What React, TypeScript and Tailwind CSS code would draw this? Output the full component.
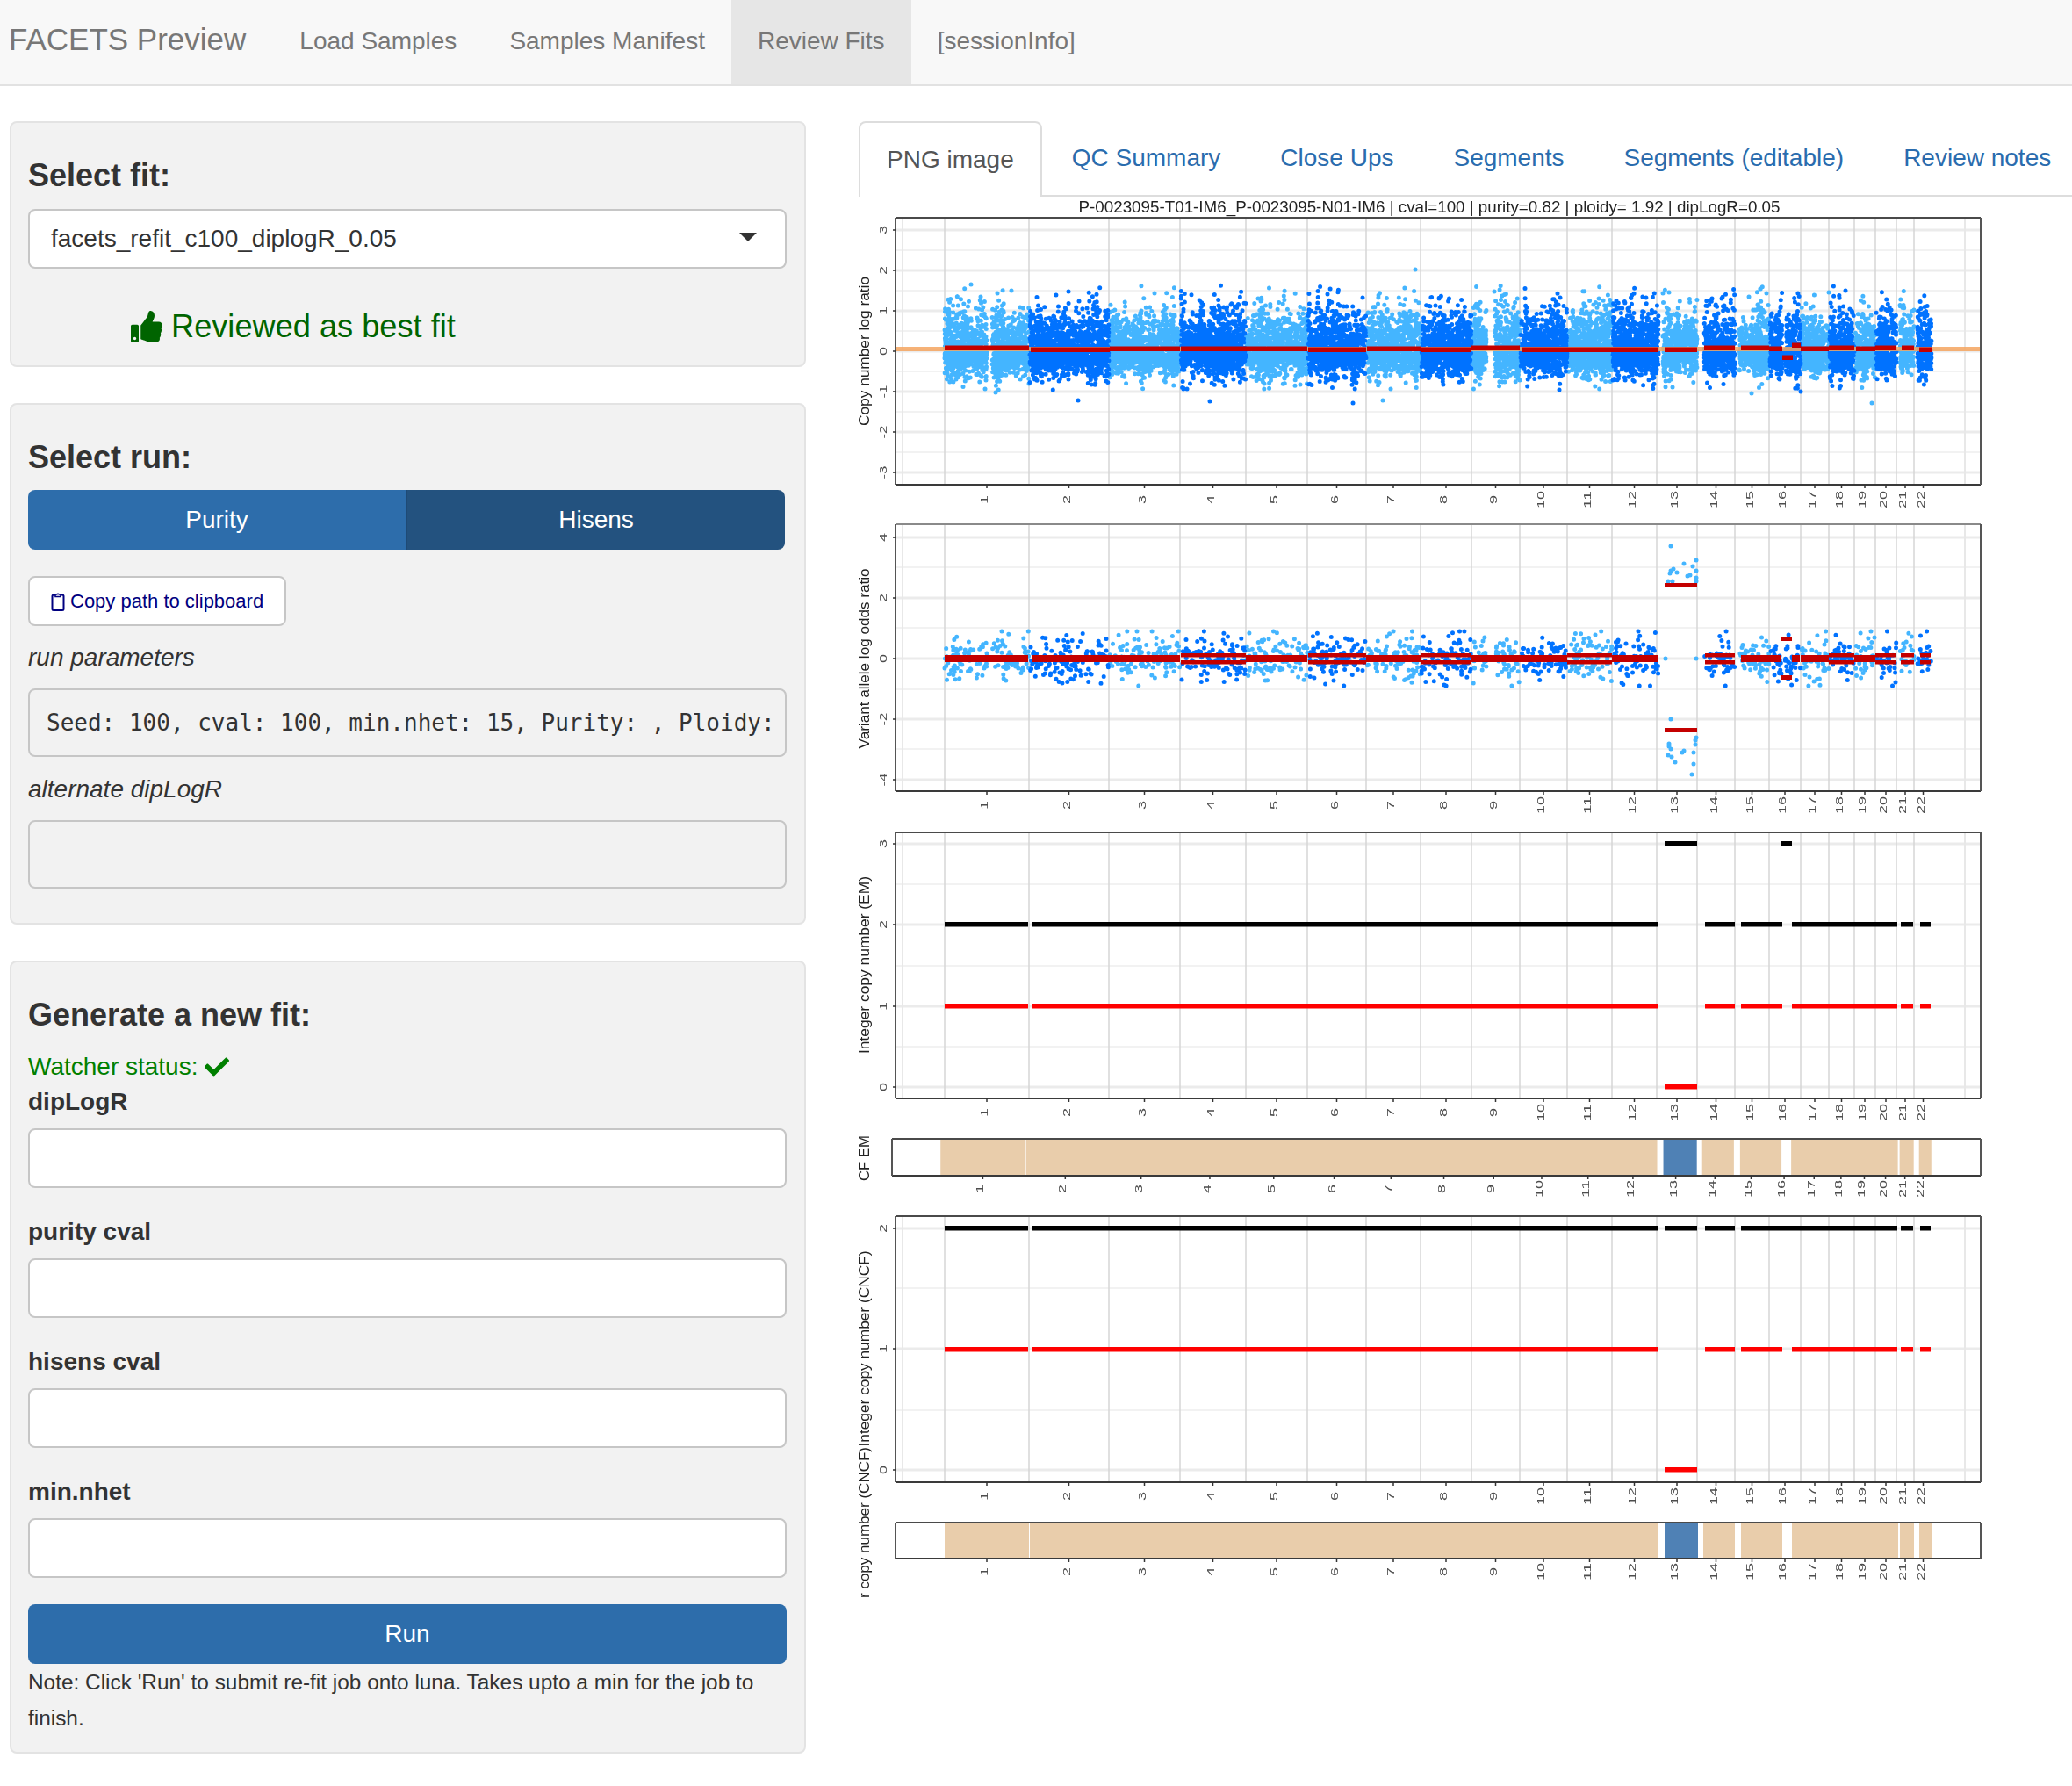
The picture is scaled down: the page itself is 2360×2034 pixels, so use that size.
import { useMemo } from 'react'
import { FaCheck, FaThumbsUp } from 'react-icons/fa'

// chromosome boundaries of the facets plot, in page pixels
const CHROM = [1076, 1172, 1263, 1344, 1419, 1489, 1556, 1618, 1676, 1731, 1785, 1836, 1887, 1933, 1976, 2015, 2051, 2083, 2112, 2136, 2160, 2180, 2201]
const X_LEFT = 1020
const X_RIGHT = 2256

// where the probes actually are (white gaps at centromeres and chr13 etc.)
const PROBE_SPANS: [number, number, number][] = [
  [1076, 1124, 1], [1130, 1172, 1], [1173, 1263, 2], [1264, 1344, 3], [1345, 1419, 4], [1420, 1489, 5], [1490, 1556, 6],
  [1557, 1618, 7], [1619, 1676, 8], [1677, 1693, 9], [1703, 1731, 9], [1732, 1785, 10], [1786, 1836, 11], [1837, 1889, 12],
  [1894, 1933, 13], [1941, 1976, 14], [1981, 2015, 15], [2016, 2030, 16], [2033, 2051, 16], [2052, 2083, 17], [2084, 2112, 18],
  [2113, 2136, 19], [2137, 2160, 20], [2164, 2180, 21], [2184, 2200, 22],
]

function mulberry(seed: number) {
  let a = seed
  return () => {
    a = (a + 0x6d2b79f5) | 0
    let t = Math.imul(a ^ (a >>> 15), 1 | a)
    t = (t + Math.imul(t ^ (t >>> 7), 61 | t)) ^ t
    return ((t ^ (t >>> 14)) >>> 0) / 4294967296
  }
}

function gauss(r: () => number) {
  const g = Math.sqrt(-2 * Math.log(r() + 1e-9)) * Math.cos(2 * Math.PI * r())
  return Math.max(-2.5, Math.min(2.5, g))
}

function buildLogR() {
  const r = mulberry(11)
  const paths = { light: '', dark: '' }
  for (const [a, b, chr] of PROBE_SPANS) {
    let s = ''
    const n = (b - a) * 14
    // every few pixels the spread changes, that gives the streaky columns
    const bins = Math.ceil((b - a) / 5) + 1
    const amp = Array.from({ length: bins }, () => 0.6 + r() * 0.55)
    for (let i = 0; i < n; i++) {
      const x = a + r() * (b - a)
      const k = amp[Math.floor((x - a) / 5)]
      const g = gauss(r)
      const v = g > 0 ? g * 0.58 * k : g * 0.34 * k
      const y = 400 - v * 46
      s += `M${x.toFixed(1)} ${y.toFixed(1)}h0`
    }
    if (chr % 2) paths.light += s
    else paths.dark += s
  }
  return paths
}

// hand read dots around the chr13 segments in the log odds plot
const LOR_CHR13 = [
  [1903, 622], [1903, 650], [1906, 648], [1910, 652], [1900, 662], [1905, 662], [1918, 642], [1932, 638], [1928, 645], [1932, 650], [1922, 656], [1925, 655], [1932, 658],
  [1932, 662], [1902, 653], [1903, 819], [1901, 847], [1903, 853], [1900, 860], [1904, 862], [1908, 868], [1918, 855], [1931, 843], [1931, 848], [1929, 857], [1929, 870],
  [1927, 882], [1916, 857], [1901, 850], [1932, 840], [1897, 750], [1932, 750],
]

function buildLogOdds() {
  const r = mulberry(29)
  const paths = { light: '', dark: '' }
  for (const [x, y] of LOR_CHR13) paths.light += `M${x} ${y}h0`
  for (const [a, b, chr] of PROBE_SPANS) {
    if (chr === 13) continue
    let s = ''
    const n = (b - a) * 1.5
    for (let i = 0; i < n; i++) {
      const x = a + r() * (b - a)
      const y = 750 - gauss(r) * 0.36 * 34.5
      s += `M${x.toFixed(1)} ${y.toFixed(1)}h0`
    }
    if (chr % 2) paths.light += s
    else paths.dark += s
  }
  return paths
}

// x1, x2, y of the red segment lines in the log ratio plot
const CNLR_SEGS = [
  [1076, 1172, 396], [1174, 1264, 398], [1264, 1344, 397], [1345, 1419, 397], [1419, 1489, 397], [1490, 1556, 398], [1557, 1618, 397], [1619, 1676, 398],
  [1676, 1731, 396], [1733, 1785, 398], [1785, 1836, 398], [1836, 1889, 398], [1896, 1933, 398], [1941, 1976, 396], [1983, 2015, 396], [2015, 2030, 397],
  [2030, 2042, 407], [2041, 2051, 393], [2051, 2083, 397], [2083, 2112, 396], [2114, 2136, 397], [2136, 2160, 396], [2166, 2180, 396], [2186, 2200, 398],
]

const CNLR_OUTLIERS = [
  [1106, 324], [1612, 307], [1152, 331], [1136, 334], [1217, 332], [1229, 343], [1315, 334], [1512, 335], [1433, 340], [1552, 339], [1635, 348], [1702, 332],
  [1777, 339], [1894, 334], [1901, 333], [1950, 340], [1961, 340], [1992, 338], [2012, 334], [2083, 333], [2102, 331], [1122, 443], [1134, 447], [1228, 456],
  [1352, 443], [1378, 457], [1541, 459], [1575, 456], [1584, 443], [1995, 448], [2132, 459], [2051, 446], [1776, 444], [1905, 441],
]

const LOR_SEGS = [
  [1076, 1171], [1175, 1263], [1263, 1344], [1419, 1489], [1556, 1618], [1676, 1731], [1731, 1785], [1836, 1889], [1983, 2029], [2041, 2050], [2051, 2083], [2112, 2136],
]
const LOR_DOUBLE = [
  [1345, 1419], [1490, 1556], [1619, 1676], [1785, 1836], [1942, 1976], [2083, 2112], [2136, 2160], [2165, 2180], [2187, 2199],
]

const EM_BLACK = [[1076, 1171], [1175, 1889], [1942, 1976], [1983, 2030], [2041, 2161], [2165, 2179], [2187, 2199]]
const EM_RED = EM_BLACK
const CNCF_BLACK = [[1076, 1171], [1175, 1889], [1896, 1933], [1942, 1976], [1983, 2161], [2165, 2179], [2187, 2199]]

const TAN_BANDS = [[1076, 1172], [1173, 1889], [1940, 1976], [1983, 2030], [2041, 2162], [2164, 2180], [2186, 2200]]

// the CF EM strip has a slightly wider panel, so its x scale is a bit different
const cfEmX = (x: number) => x - (5 * (X_RIGHT - x)) / (X_RIGHT - X_LEFT)
const sameX = (x: number) => x

function Frame({ top, bottom, left = X_LEFT, lightTop = false }: { top: number; bottom: number; left?: number; lightTop?: boolean }) {
  return (
    <>
      <line x1={left} x2={X_RIGHT} y1={top} y2={top} stroke={lightTop ? '#8a8a8a' : '#4a4a4a'} strokeWidth={2} />
      <line x1={left} x2={X_RIGHT} y1={bottom} y2={bottom} stroke="#3a3a3a" strokeWidth={2} />
      <line x1={left} x2={left} y1={top} y2={bottom} stroke="#555" strokeWidth={2} />
      <line x1={X_RIGHT} x2={X_RIGHT} y1={top} y2={bottom} stroke="#555" strokeWidth={2} />
    </>
  )
}

function VGrid({ top, bottom }: { top: number; bottom: number }) {
  return (
    <>
      {CHROM.slice(0, 22).map((x) => (
        <line key={x} x1={x} x2={x} y1={top} y2={bottom} stroke="#d6d6d6" strokeWidth={1.5} />
      ))}
      <line x1={1028} x2={1028} y1={top} y2={bottom} stroke="#e8e8e8" strokeWidth={2} />
      <line x1={2238} x2={2238} y1={top} y2={bottom} stroke="#e8e8e8" strokeWidth={2} />
    </>
  )
}

function HGrid({ major, minor }: { major: number[]; minor: number[] }) {
  return (
    <>
      {minor.map((y) => (
        <line key={y} x1={X_LEFT} x2={X_RIGHT} y1={y} y2={y} stroke="#f2f2f2" strokeWidth={2} />
      ))}
      {major.map((y) => (
        <line key={y} x1={X_LEFT} x2={X_RIGHT} y1={y} y2={y} stroke="#ebebeb" strokeWidth={3} />
      ))}
    </>
  )
}

function XAxis({ axisY, labelY, mapX = sameX }: { axisY: number; labelY: number; mapX?: (x: number) => number }) {
  return (
    <>
      {CHROM.slice(0, 22).map((start, i) => {
        const x = mapX((start + CHROM[i + 1]) / 2)
        const label = String(i + 1)
        return (
          <g key={start}>
            <line x1={x} x2={x} y1={axisY} y2={axisY + 4} stroke="#333" strokeWidth={1.5} />
            <text
              x={x + 1}
              y={labelY}
              fontSize={11}
              fill="#4d4d4d"
              textAnchor="middle"
              textLength={label.length === 1 ? 10 : 20}
              lengthAdjust="spacingAndGlyphs"
              transform={`rotate(-90 ${x + 1} ${labelY})`}
            >
              {label}
            </text>
          </g>
        )
      })}
    </>
  )
}

function YAxis({ ticks, left = X_LEFT }: { ticks: [string, number][]; left?: number }) {
  return (
    <>
      {ticks.map(([label, y]) => (
        <g key={label}>
          <line x1={left - 3} x2={left} y1={y} y2={y} stroke="#333" strokeWidth={1.5} />
          <text
            x={1010}
            y={y}
            fontSize={11}
            fill="#4d4d4d"
            textAnchor="middle"
            textLength={label.length === 1 ? 10 : 15}
            lengthAdjust="spacingAndGlyphs"
            transform={`rotate(-90 1010 ${y})`}
          >
            {label}
          </text>
        </g>
      ))}
    </>
  )
}

function YTitle({ y, length, children }: { y: number; length: number; children: string }) {
  return (
    <text
      x={990}
      y={y}
      fontSize={16}
      fill="#222"
      textAnchor="middle"
      textLength={length}
      lengthAdjust="spacingAndGlyphs"
      transform={`rotate(-90 990 ${y})`}
    >
      {children}
    </text>
  )
}

function Bands({ top, bottom, mapX = sameX }: { top: number; bottom: number; mapX?: (x: number) => number }) {
  return (
    <>
      {TAN_BANDS.map(([a, b]) => (
        <rect key={a} x={mapX(a)} y={top} width={mapX(b) - mapX(a)} height={bottom - top} fill="#e9cdab" />
      ))}
      <rect x={mapX(1896)} y={top} width={mapX(1934) - mapX(1896)} height={bottom - top} fill="#4f81b5" />
    </>
  )
}

function FacetsPlot() {
  const logR = useMemo(buildLogR, [])
  const logOdds = useMemo(buildLogOdds, [])

  return (
    <svg
      width={1290}
      height={1614}
      viewBox="970 224 1290 1614"
      className="block blur-[0.5px]"
      style={{ fontFamily: '"Liberation Sans", Arial, sans-serif' }}
    >
      <text x={1628} y={242} fontSize={18} fill="#222" textAnchor="middle" textLength={799} lengthAdjust="spacingAndGlyphs">
        P-0023095-T01-IM6_P-0023095-N01-IM6 | cval=100 | purity=0.82 | ploidy= 1.92 | dipLogR=0.05
      </text>

      {/* cnlr */}
      <HGrid major={[262, 308, 354, 400, 446, 492, 538]} minor={[285, 331, 377, 423, 469, 515]} />
      <VGrid top={248} bottom={552} />
      <path d={logR.light} stroke="#44b5ff" strokeWidth={5} strokeLinecap="round" fill="none" />
      <path d={logR.dark} stroke="#0072ff" strokeWidth={5} strokeLinecap="round" fill="none" />
      {CNLR_OUTLIERS.map(([x, y]) => {
        const odd = PROBE_SPANS.find(([a, b]) => x >= a - 3 && x <= b + 3)
        return <circle key={`${x}-${y}`} cx={x} cy={y} r={2.5} fill={odd && odd[2] % 2 === 0 ? '#0072ff' : '#44b5ff'} />
      })}
      <rect x={X_LEFT} y={395} width={X_RIGHT - X_LEFT} height={5} fill="#f5a45f" opacity={0.85} />
      {CNLR_SEGS.map(([a, b, y]) => (
        <rect key={a} x={a} y={y - 2.5} width={b - a} height={5.5} fill="#c40000" />
      ))}
      <Frame top={248} bottom={552} />
      <YAxis ticks={[['3', 262], ['2', 308], ['1', 354], ['0', 400], ['-1', 446], ['-2', 492], ['-3', 538]]} />
      <XAxis axisY={552} labelY={569} />
      <YTitle y={400} length={170}>Copy number log ratio</YTitle>

      {/* valor */}
      <HGrid major={[612, 681, 750, 819, 888]} minor={[646, 715, 785, 853]} />
      <VGrid top={597} bottom={901} />
      <path d={logOdds.light} stroke="#44b5ff" strokeWidth={5} strokeLinecap="round" fill="none" />
      <path d={logOdds.dark} stroke="#0072ff" strokeWidth={5} strokeLinecap="round" fill="none" />
      {LOR_SEGS.map(([a, b]) => (
        <rect key={a} x={a} y={746} width={b - a} height={8} fill="#c40000" />
      ))}
      {LOR_DOUBLE.map(([a, b]) => (
        <g key={a}>
          <rect x={a} y={744} width={b - a} height={4.5} fill="#c40000" />
          <rect x={a} y={752} width={b - a} height={4.5} fill="#c40000" />
        </g>
      ))}
      <rect x={1896} y={664} width={37} height={5} fill="#c40000" />
      <rect x={1896} y={829} width={37} height={5} fill="#c40000" />
      <rect x={2029} y={725} width={12} height={5} fill="#c40000" />
      <rect x={2029} y={769} width={12} height={5} fill="#c40000" />
      <Frame top={597} bottom={901} lightTop />
      <YAxis ticks={[['4', 612], ['2', 681], ['0', 750], ['-2', 819], ['-4', 888]]} />
      <XAxis axisY={901} labelY={917} />
      <YTitle y={750} length={205}>Variant allele log odds ratio</YTitle>

      {/* em integer copy number */}
      <HGrid major={[961, 1053, 1146, 1238]} minor={[1007, 1100, 1192]} />
      <VGrid top={948} bottom={1251} />
      {EM_BLACK.map(([a, b]) => (
        <rect key={a} x={a} y={1050} width={b - a} height={5.5} fill="#000" />
      ))}
      {EM_RED.map(([a, b]) => (
        <rect key={a} x={a} y={1143} width={b - a} height={5.5} fill="#f00" />
      ))}
      <rect x={1896} y={958} width={37} height={5.5} fill="#000" />
      <rect x={2029} y={958} width={12} height={5.5} fill="#000" />
      <rect x={1896} y={1235} width={37} height={5.5} fill="#f00" />
      <Frame top={948} bottom={1251} />
      <YAxis ticks={[['3', 961], ['2', 1053], ['1', 1146], ['0', 1238]]} />
      <XAxis axisY={1251} labelY={1267} />
      <YTitle y={1099} length={202}>Integer copy number (EM)</YTitle>

      {/* cf em */}
      <Bands top={1297} bottom={1339} mapX={cfEmX} />
      <Frame top={1297} bottom={1339} left={1016} />
      <XAxis axisY={1339} labelY={1354} mapX={cfEmX} />
      <YTitle y={1319} length={52}>CF EM</YTitle>

      {/* cncf integer copy number */}
      <HGrid major={[1399, 1536, 1674]} minor={[1467, 1606]} />
      <VGrid top={1385} bottom={1688} />
      {CNCF_BLACK.map(([a, b]) => (
        <rect key={a} x={a} y={1396} width={b - a} height={5.5} fill="#000" />
      ))}
      {EM_RED.map(([a, b]) => (
        <rect key={a} x={a} y={1534} width={b - a} height={5.5} fill="#f00" />
      ))}
      <rect x={1896} y={1671} width={37} height={5.5} fill="#f00" />
      <Frame top={1385} bottom={1688} />
      <YAxis ticks={[['2', 1399], ['1', 1536], ['0', 1674]]} />
      <XAxis axisY={1688} labelY={1704} />
      <YTitle y={1536} length={223}>Integer copy number (CNCF)</YTitle>

      {/* cf cncf */}
      <Bands top={1734} bottom={1775} />
      <Frame top={1734} bottom={1775} />
      <XAxis axisY={1775} labelY={1790} />
      <YTitle y={1734} length={172}>r copy number (CNCF)</YTitle>
    </svg>
  )
}

const NAV_LINKS = ['Load Samples', 'Samples Manifest', 'Review Fits', '[sessionInfo]']
const TABS = ['QC Summary', 'Close Ups', 'Segments', 'Segments (editable)', 'Review notes']

function Field({ label }: { label: string }) {
  return (
    <div className="mb-[30px]">
      <label className="block text-[28px] leading-[40px] font-bold text-[#333] mb-[10px]">{label}</label>
      <div className="h-[68px] bg-white border-2 border-[#c6c6c6] rounded-lg" />
    </div>
  )
}

export default function App() {
  return (
    <div className="min-h-[2034px] bg-white text-[28px] text-[#333] font-['Liberation_Sans',Arial,sans-serif]">
      <nav className="flex h-[98px] items-stretch bg-[#f8f8f8] border-b-2 border-[#e2e2e2]">
        <a className="pl-[10px] pr-[31px] text-[35px] leading-[90px] text-[#777]">FACETS Preview</a>
        {NAV_LINKS.map((link) => (
          <a
            key={link}
            className={`px-[30px] leading-[93px] text-[#777] ${link === 'Review Fits' ? 'bg-[#e6e6e6] text-[#555]' : ''}`}
          >
            {link}
          </a>
        ))}
      </nav>

      <div className="flex">
        <aside className="w-[907px] ml-[11px] shrink-0 pt-[40px]">
          <section className="h-[280px] bg-[#f2f2f2] border-2 border-[#e3e3e3] rounded-lg pl-[19px] pr-[20px] pt-[40px]">
            <h4 className="text-[36px] leading-[40px] font-bold text-[#333]">Select fit:</h4>
            <div className="flex items-center justify-between h-[68px] mt-[18px] bg-white border-2 border-[#c6c6c6] rounded-lg pl-[24px] pr-[32px]">
              <span>facets_refit_c100_diplogR_0.05</span>
              <span className="w-0 h-0 border-x-[10px] border-t-[10px] border-x-transparent border-t-[#333] mb-[4px]" />
            </div>
            <div className="flex items-center gap-[10px] mt-[45px] ml-[117px] text-[36.2px] leading-[42px] text-[#006400]">
              <FaThumbsUp className="size-[36px]" />
              <span>Reviewed as best fit</span>
            </div>
          </section>

          <section className="h-[594px] mt-[41px] bg-[#f2f2f2] border-2 border-[#e3e3e3] rounded-lg pl-[19px] pr-[20px] pt-[40px]">
            <h4 className="text-[36px] leading-[40px] font-bold text-[#333]">Select run:</h4>
            <div className="flex h-[68px] mt-[17px] w-[862px] rounded-lg overflow-hidden text-white">
              <div className="flex-1 flex items-center justify-center bg-[#2d6dab]">Purity</div>
              <div className="flex-1 flex items-center justify-center bg-[#23527f] border-l-2 border-[#1e4a75]">Hisens</div>
            </div>
            <button className="flex items-center gap-[6px] h-[57px] w-[294px] mt-[30px] pl-[24px] bg-white border-2 border-[#c6c6c6] rounded-lg text-[22px] text-[#000080]">
              <svg width="16" height="22" viewBox="0 0 16 22" fill="none" stroke="#000080" strokeWidth="2">
                <path d="M5 3.5H3A1.5 1.5 0 0 0 1.5 5v14.5A1.5 1.5 0 0 0 3 21h10a1.5 1.5 0 0 0 1.5-1.5V5A1.5 1.5 0 0 0 13 3.5h-2" />
                <path d="M5 5.5V3h1.8a1.3 1.3 0 0 1 2.4 0H11v2.5z" strokeWidth="1.6" />
              </svg>
              Copy path to clipboard
            </button>
            <p className="mt-[16px] leading-[40px] italic">run parameters</p>
            <pre className="flex items-center h-[78px] mt-[15px] bg-[#f2f2f2] border-2 border-[#c6c6c6] rounded-lg pl-[19px] overflow-hidden text-[26px] font-['DejaVu_Sans_Mono',monospace]">
              Seed: 100, cval: 100, min.nhet: 15, Purity: , Ploidy:
            </pre>
            <p className="mt-[17px] leading-[40px] italic">alternate dipLogR</p>
            <div className="h-[78px] mt-[15px] border-2 border-[#c6c6c6] rounded-lg" />
          </section>

          <section className="h-[903px] mt-[41px] bg-[#f2f2f2] border-2 border-[#e3e3e3] rounded-lg pl-[19px] pr-[20px] pt-[40px]">
            <h4 className="text-[36px] leading-[40px] font-bold text-[#333]">Generate a new fit:</h4>
            <div className="flex items-center gap-[8px] mt-[19px] leading-[40px] text-[#008000]">
              Watcher status: <FaCheck className="size-[28px]" />
            </div>
            <div>
              <Field label="dipLogR" />
              <Field label="purity cval" />
              <Field label="hisens cval" />
              <Field label="min.nhet" />
            </div>
            <button className="w-full h-[68px] bg-[#2d6dab] text-white rounded-lg">Run</button>
            <p className="text-[24.4px] leading-[41px]">
              Note: Click 'Run' to submit re-fit job onto luna. Takes upto a min for the job to finish.
            </p>
          </section>
        </aside>

        <main className="flex-1 ml-[60px] pt-[40px] min-w-0">
          <div className="flex h-[86px] border-b-2 border-[#dddddd]">
            <span className="flex items-center h-[86px] px-[30px] bg-white border-2 border-b-0 border-[#dddddd] rounded-t-lg text-[#555] whitespace-nowrap">PNG image</span>
            {TABS.map((tab) => (
              <a key={tab} className="flex items-center px-[34px] text-[#2a6cae] whitespace-nowrap">{tab}</a>
            ))}
          </div>
          <div className="-ml-[8px]">
            <FacetsPlot />
          </div>
        </main>
      </div>
    </div>
  )
}
